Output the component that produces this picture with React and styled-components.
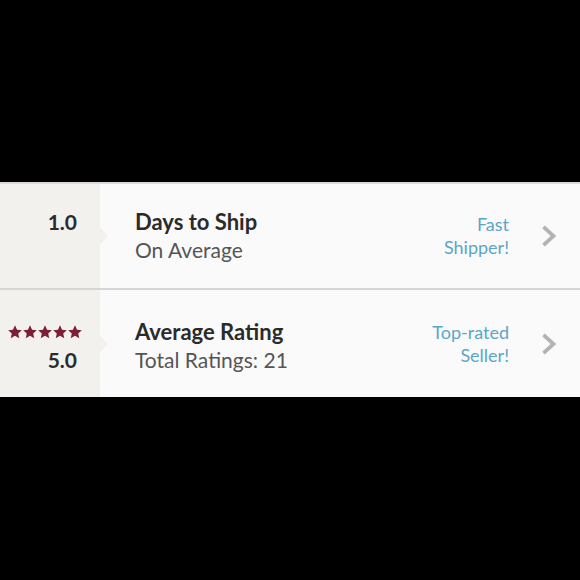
import React from "react";
import styled, {createGlobalStyle} from "styled-components";

const GlobalStyle = createGlobalStyle`
  html, body {
    margin: 0;
    padding: 0;
    background: #000;
  }
  body {
    font-family: Lato, "Open Sans", sans-serif;
    -webkit-font-smoothing: antialiased;
  }
`

const Page = styled.div`
  width: 580px;
  height: 580px;
  padding-top: 182px;
  box-sizing: border-box;
`

const List = styled.div`
  background: #fafafa;
  border-top: 2px solid #d9d9d9;
`

const Row = styled.div`
  display: flex;
  align-items: stretch;
  height: ${({tall}) => tall ? 107 : 104}px;
  border-bottom: ${({last}) => last ? 'none' : '2px solid #d6d6d6'};
`

const Score = styled.div`
  position: relative;
  width: 100px;
  flex-shrink: 0;
  background: #f2f1ee;
  display: flex;
  flex-direction: column;
  justify-content: center;
  align-items: flex-end;
  padding-right: 23px;
  padding-top: ${({shift}) => shift || 0}px;
  box-sizing: border-box;

  &:after {
    content: '';
    position: absolute;
    right: -8px;
    top: 50%;
    margin-top: -9px;
    border-style: solid;
    border-width: 9px 0 9px 8px;
    border-color: transparent transparent transparent #f2f1ee;
  }
`

const ScoreLine = styled.div`
  height: 28px;
  display: flex;
  align-items: center;
`

const ScoreValue = styled.div`
  font-weight: 700;
  font-size: 21px;
  line-height: 28px;
  color: #2b2b2b;
`

const Stars = styled.div`
  display: flex;
  gap: 1px;
  margin-right: -5px;
`

const Details = styled.div`
  flex: 1;
  display: flex;
  flex-direction: column;
  justify-content: center;
  padding-left: 35px;
  padding-top: ${({shift}) => shift || 0}px;
`

const Title = styled.div`
  font-weight: 700;
  font-size: 22px;
  line-height: 28px;
  color: #2b2b2b;
`

const Subtitle = styled.div`
  font-size: 21px;
  line-height: 28px;
  color: #555;
`

const Badge = styled.div`
  display: flex;
  align-items: center;
  text-align: right;
  font-size: 18px;
  line-height: 23px;
  color: #5ba6c9;
  padding-right: 32px;
`

const Chevron = styled.div`
  display: flex;
  align-items: center;
  padding-right: 23px;
`

const Star = () => (
    <svg width="14" height="14" viewBox="0 0 24 24">
        <path fill="#7c1f36" d="M12 0.5l3.5 7.6 8.2.8-6.2 5.5 1.8 8.1L12 18.3l-7.3 4.2 1.8-8.1L.3 8.9l8.2-.8z"/>
    </svg>
)

const ChevronIcon = () => (
    <svg width="16" height="22" viewBox="0 0 16 22">
        <path d="M2.5 1.8l10 9.2-10 9.2" fill="none" stroke="#b3b3b3" strokeWidth="3.8"/>
    </svg>
)

const StatRow = ({score, stars, title, subtitle, badge, tall, last}) => {
    const shift = tall ? 5 : 0
    return (
        <Row tall={tall} last={last}>
            <Score shift={shift}>
                {stars ? (
                    <>
                        <ScoreLine><Stars>{[0, 1, 2, 3, 4].map(i => <Star key={i}/>)}</Stars></ScoreLine>
                        <ScoreLine><ScoreValue>{score}</ScoreValue></ScoreLine>
                    </>
                ) : (
                    <>
                        <ScoreLine><ScoreValue>{score}</ScoreValue></ScoreLine>
                        <ScoreLine/>
                    </>
                )}
            </Score>
            <Details shift={shift}>
                <Title>{title}</Title>
                <Subtitle>{subtitle}</Subtitle>
            </Details>
            <Badge>{badge}</Badge>
            <Chevron><ChevronIcon/></Chevron>
        </Row>
    )
}

const App = () => (
    <Page>
        <GlobalStyle/>
        <List>
            <StatRow
                score="1.0"
                title="Days to Ship"
                subtitle="On Average"
                badge={<span>Fast<br/>Shipper!</span>}
            />
            <StatRow
                stars
                tall
                last
                score="5.0"
                title="Average Rating"
                subtitle="Total Ratings: 21"
                badge={<span>Top-rated<br/>Seller!</span>}
            />
        </List>
    </Page>
)

export default App
